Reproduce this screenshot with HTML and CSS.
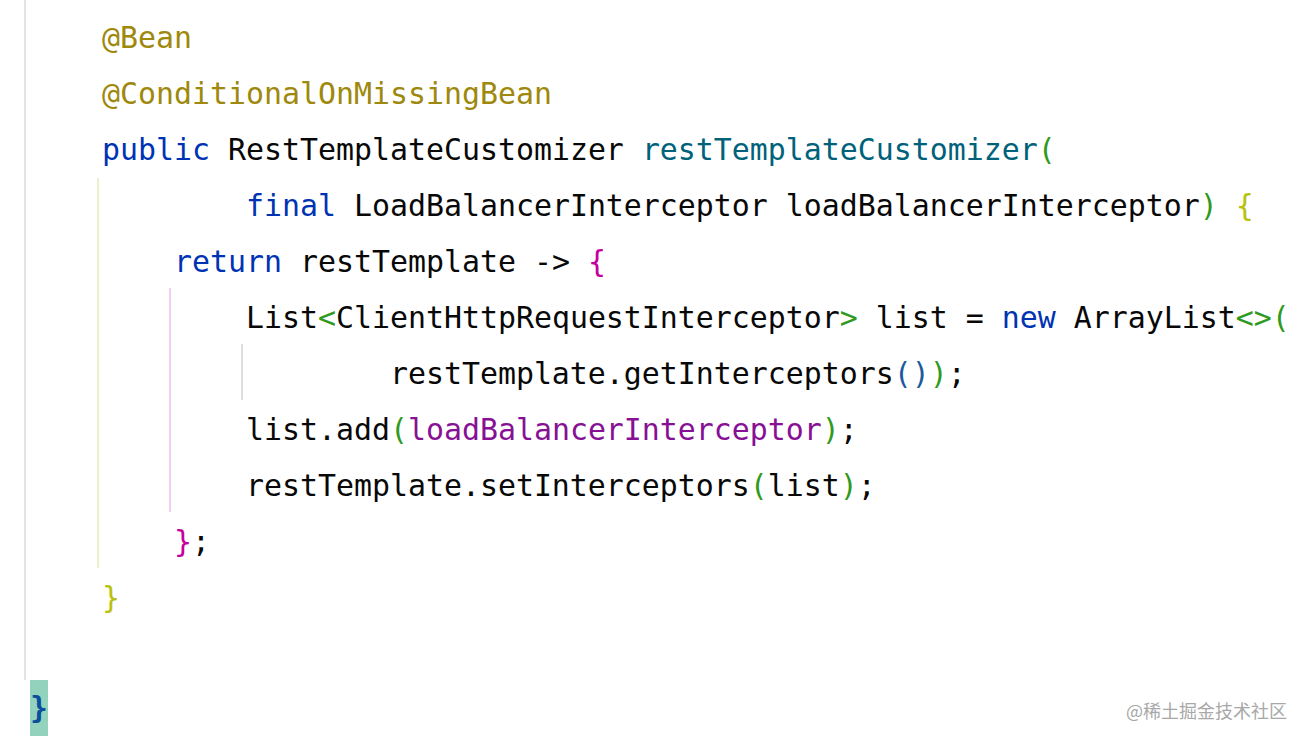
FILE: index.html
```html
<!DOCTYPE html>
<html>
<head>
<meta charset="utf-8">
<link rel="stylesheet" href="styles.css">
</head>
<body>
<div class="editor">
  <div class="block">
    <span class="guide guide-yellow"></span>
    <span class="guide guide-pink"></span>
    <span class="guide guide-gray"></span>
    <div class="line">    <span class="ann">@Bean</span></div>
    <div class="line">    <span class="ann">@ConditionalOnMissingBean</span></div>
    <div class="line">    <span class="kw">public</span> RestTemplateCustomizer <span class="fn">restTemplateCustomizer</span><span class="b-green">(</span></div>
    <div class="line">            <span class="kw">final</span> LoadBalancerInterceptor loadBalancerInterceptor<span class="b-green">)</span> <span class="b-yellow">{</span></div>
    <div class="line">        <span class="kw">return</span> restTemplate -&gt; <span class="b-magenta">{</span></div>
    <div class="line">            List<span class="b-green">&lt;</span>ClientHttpRequestInterceptor<span class="b-green">&gt;</span> list = <span class="kw">new</span> ArrayList<span class="b-green">&lt;&gt;(</span></div>
    <div class="line">                    restTemplate.getInterceptors<span class="b-blue">()</span><span class="b-green">)</span>;</div>
    <div class="line">            list.add<span class="b-green">(</span><span class="param">loadBalancerInterceptor</span><span class="b-green">)</span>;</div>
    <div class="line">            restTemplate.setInterceptors<span class="b-green">(</span>list<span class="b-green">)</span>;</div>
    <div class="line">        <span class="b-magenta">}</span>;</div>
    <div class="line">    <span class="b-yellow">}</span></div>
    <div class="line"> </div>
  </div>
  <div class="line last"><span class="match">}</span></div>
  <div class="watermark">@稀土掘金技术社区</div>
</div>
</body>
</html>
```

FILE: styles.css
```css
html, body {
  margin: 0;
  padding: 0;
  background: #ffffff;
}

.editor {
  position: relative;
  width: 1308px;
  height: 742px;
  overflow: hidden;
  padding-left: 24px;
  box-sizing: border-box;
  font-family: "DejaVu Sans Mono", "Liberation Mono", monospace;
  font-size: 29.9px;
  color: #080808;
}

.block {
  position: relative;
  border-left: 2px solid #e4e4e4;
  padding-left: 4px;
  padding-top: 8px;
}

.line {
  height: 56px;
  line-height: 60px;
  white-space: pre;
}

.last {
  padding-left: 6px;
  line-height: 56px;
}

.match {
  display: inline-block;
  height: 56px;
  background: #93d3bd;
  color: #0b4f9c;
  font-weight: bold;
}

.guide {
  position: absolute;
  width: 2px;
}

.guide-yellow {
  left: 71px;
  top: 178px;
  height: 390px;
  background: #eef0cc;
}

.guide-pink {
  left: 143px;
  top: 288px;
  height: 224px;
  background: #f4cdef;
}

.guide-gray {
  left: 215px;
  top: 344px;
  height: 56px;
  background: #dedede;
}

.ann { color: #9e880d; }
.kw { color: #0033b3; }
.fn { color: #00627a; }
.param { color: #871094; }
.b-green { color: #2f9a1e; }
.b-yellow { color: #b8c20c; }
.b-magenta { color: #c5009e; }
.b-blue { color: #1b5aa0; }

.watermark {
  position: absolute;
  right: 21px;
  top: 698px;
  font-family: "Noto Sans CJK SC", sans-serif;
  font-size: 18px;
  line-height: 24px;
  color: #a8a8a8;
}
```
